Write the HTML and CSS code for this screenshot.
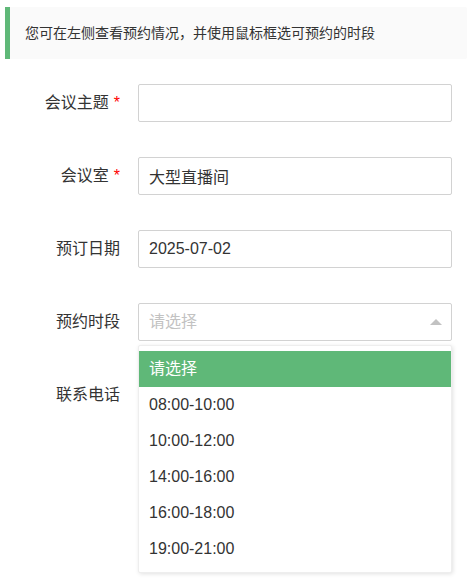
FILE: index.html
```html
<!DOCTYPE html>
<html lang="zh-CN">
<head>
<meta charset="utf-8">
<title>会议预约</title>
<link rel="stylesheet" href="styles.css">
</head>
<body>
<div class="page">
  <blockquote class="quote">您可在左侧查看预约情况，并使用鼠标框选可预约的时段</blockquote>
  <form class="form">
    <div class="item">
      <label class="label">会议主题<span class="req">*</span></label>
      <div class="field"><input class="input" type="text" value=""></div>
    </div>
    <div class="item">
      <label class="label">会议室<span class="req">*</span></label>
      <div class="field"><input class="input" type="text" value="大型直播间"></div>
    </div>
    <div class="item">
      <label class="label">预订日期</label>
      <div class="field"><input class="input" type="text" value="2025-07-02"></div>
    </div>
    <div class="item item-top">
      <label class="label">预约时段</label>
      <div class="field select">
        <input class="input" type="text" placeholder="请选择" readonly>
        <i class="arrow"></i>
        <dl class="dropdown">
          <dd class="option selected">请选择</dd>
          <dd class="option">08:00-10:00</dd>
          <dd class="option">10:00-12:00</dd>
          <dd class="option">14:00-16:00</dd>
          <dd class="option">16:00-18:00</dd>
          <dd class="option">19:00-21:00</dd>
        </dl>
      </div>
    </div>
    <div class="item">
      <label class="label">联系电话</label>
      <div class="field"><input class="input" type="text" value=""></div>
    </div>
  </form>
</div>
</body>
</html>
```
FILE: styles.css
```css
* { box-sizing: border-box; }
html, body { margin: 0; padding: 0; background: #fff; }
body {
  font-family: "Liberation Sans", "Noto Sans CJK SC", Arial, sans-serif;
  color: #333;
}
.page { padding: 7px 4px 0 5px; min-height: 585px; }
.quote {
  margin: 0;
  padding: 15px;
  border-left: 5px solid #5FB878;
  border-radius: 0 2px 2px 0;
  background: #fafafa;
  font-size: 14px;
  line-height: 22px;
  color: #333;
}
.form {
  margin-top: 25px;
  display: flex;
  flex-direction: column;
  gap: 35px;
}
.item { display: flex; align-items: center; }
.item-top { position: relative; z-index: 5; }
.label {
  width: 115px;
  text-align: right;
  font-size: 16px;
  line-height: 38px;
  color: #333;
  white-space: nowrap;
}
.req { color: #ff0000; margin-left: 5px; font-size: 16px; }
.field { margin-left: 18px; width: 314px; position: relative; }
.input {
  display: block;
  width: 100%;
  height: 38px;
  border: 1px solid #d2d2d2;
  border-radius: 2px;
  padding: 0 10px;
  font-family: inherit;
  font-size: 16px;
  color: #333;
  background: #fff;
  outline: none;
}
.input::placeholder { color: #c2c2c2; }
.arrow {
  position: absolute;
  right: 10px;
  top: 16px;
  width: 0; height: 0;
  border-style: solid;
  border-width: 0 6px 6px 6px;
  border-color: transparent transparent #c2c2c2 transparent;
}
.dropdown {
  position: absolute;
  left: 0;
  top: 42px;
  width: 314px;
  margin: 0;
  padding: 5px 0;
  background: #fff;
  border: 1px solid #eee;
  border-radius: 2px;
  box-shadow: 1px 1px 4px rgba(0,0,0,.12);
  z-index: 10;
}
.option {
  margin: 0;
  padding: 0 10px;
  line-height: 36px;
  font-size: 16px;
  color: #333;
}
.option.selected { background: #5FB878; color: #fff; }
```
